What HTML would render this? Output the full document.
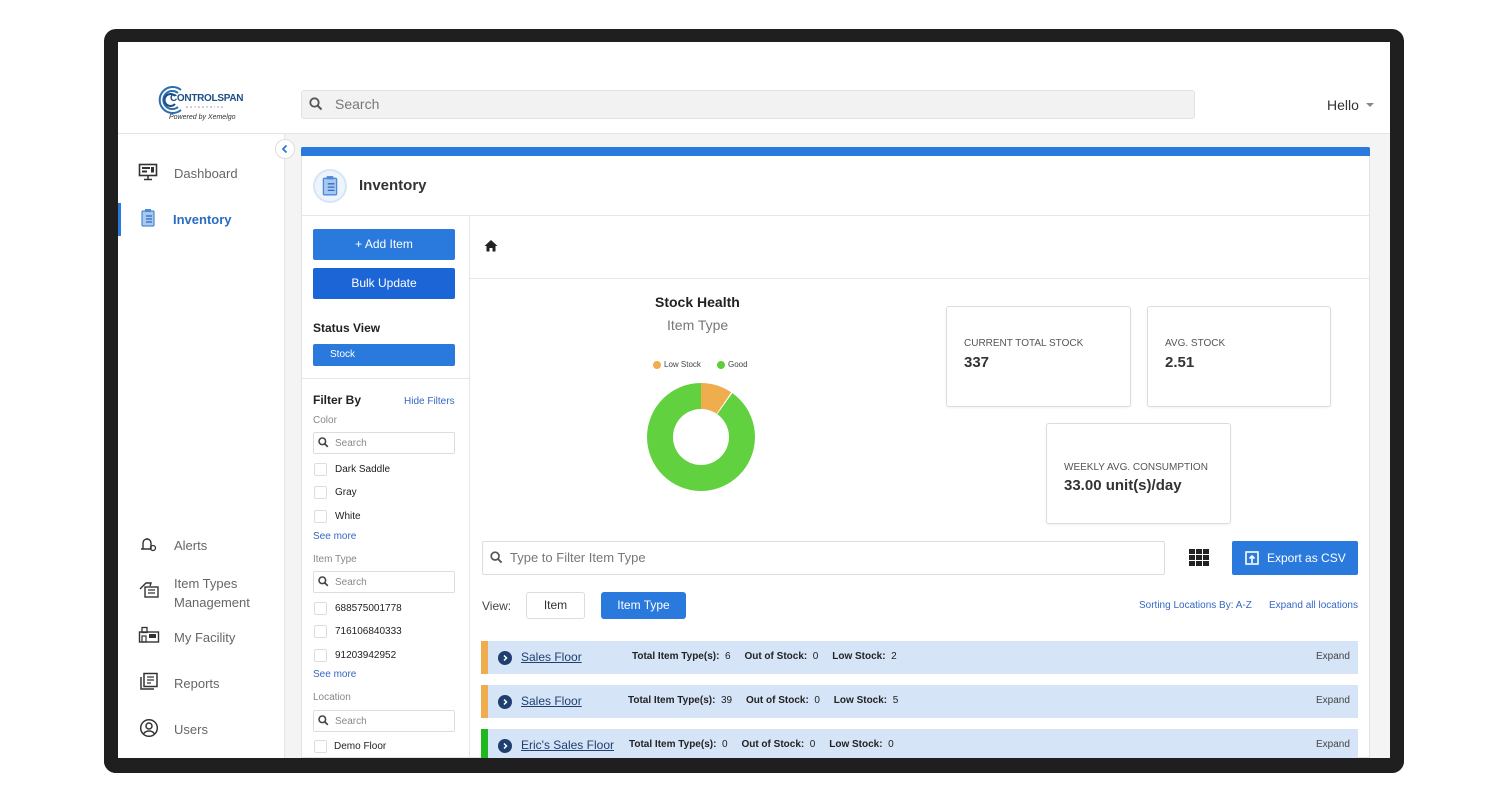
<!DOCTYPE html>
<html><head><meta charset="utf-8"><style>
*{box-sizing:border-box;margin:0;padding:0}
body{width:1500px;height:800px;background:#fff;font-family:"Liberation Sans",Arial,sans-serif;position:relative;overflow:hidden;color:#222}
.a{position:absolute}
.bezel{left:104px;top:29px;width:1300px;height:744px;background:#1f1f1f;border-radius:12px}
.screen{left:118px;top:42px;width:1272px;height:716px;background:#fff;overflow:hidden}
.blue{background:#2a7ade;color:#fff}
.cb{width:13px;height:13px;border:1px solid #ddd;border-radius:2px;background:#fff}
.srch{border:1px solid #ddd;border-radius:2px;height:22px;background:#fff}
.row{left:481px;width:877px;height:33px;background:#d6e4f7;font-size:10px}
.row b{font-weight:bold}
.lnk{color:#3567c4}
.box{border:1px solid #ddd;border-radius:3px;background:#fff;box-shadow:0 1px 2px rgba(0,0,0,.06)}
.nav{font-size:13px;color:#666}
.chev{width:14px;height:14px;border-radius:50%;background:#1e3f70}
</style></head><body>
<div class="a bezel"></div>
<div class="a screen"></div>
<div class="a" style="left:118px;top:133px;width:1272px;height:1px;background:#e4e4e4"></div>
<svg class="a" style="left:155px;top:84px" width="32" height="32" viewBox="0 0 32 32"><g fill="none" stroke="#2a6cb0" stroke-width="2"><path d="M26 6A13 13 0 1 0 26 26"/><path d="M23 9A9 9 0 1 0 23 23"/></g><path d="M20 12A6 6 0 1 0 20 20" fill="none" stroke="#1b4f86" stroke-width="2"/></svg>
<div class="a" style="left:170px;top:93px;font-size:10px;font-weight:bold;color:#1b4f86;letter-spacing:-.3px">CONTROLSPAN</div>
<div class="a" style="left:186px;top:105px;font-size:3px;color:#888;letter-spacing:2px">ENTERPRISE</div>
<div class="a" style="left:169px;top:114px;font-size:7px;font-style:italic;color:#333">Powered by Xemelgo</div>
<div class="a" style="left:301px;top:90px;width:894px;height:29px;background:#f2f2f2;border:1px solid #e2e2e2;border-radius:3px"></div>
<svg class="a" style="left:309px;top:97px" width="14" height="14" viewBox="0 0 14 14"><circle cx="5.5" cy="5.5" r="4.2" fill="none" stroke="#555" stroke-width="1.8"/><path d="M8.7 8.7L12.5 12.5" stroke="#555" stroke-width="2"/></svg>
<div class="a" style="left:335px;top:96px;font-size:14px;color:#777">Search</div>
<div class="a" style="left:1327px;top:97px;font-size:14px;color:#333">Hello</div>
<div class="a" style="left:1366px;top:103px;border-left:4px solid transparent;border-right:4px solid transparent;border-top:4px solid #888"></div>
<div class="a" style="left:285px;top:134px;width:1105px;height:624px;background:#f4f4f4"></div>
<div class="a" style="left:284px;top:134px;width:1px;height:624px;background:#e6e6e6"></div>
<div class="a" style="left:275px;top:139px;width:20px;height:20px;border-radius:50%;background:#fff;border:1px solid #ddd"></div>
<svg class="a" style="left:280px;top:144px" width="10" height="10" viewBox="0 0 10 10"><path d="M6.5 1.5L3 5l3.5 3.5" fill="none" stroke="#2a7ade" stroke-width="1.8"/></svg>
<div class="a" style="left:118px;top:203px;width:3px;height:33px;background:#2a7ade"></div>
<svg class="a" style="left:138px;top:163px" width="20" height="18" viewBox="0 0 20 18"><rect x="1.5" y="1.5" width="17" height="11" fill="none" stroke="#333" stroke-width="1.6"/><rect x="4" y="4" width="8" height="2" fill="#333"/><rect x="4" y="7.5" width="5" height="2" fill="#333"/><rect x="13" y="4" width="3" height="5.5" fill="#333"/><path d="M10 13v3M6 16.5h8" stroke="#333" stroke-width="1.5"/></svg>
<div class="a nav" style="left:174px;top:166px">Dashboard</div>
<svg class="a" style="left:139px;top:208px" width="18" height="20" viewBox="0 0 18 20"><rect x="3" y="3" width="12" height="15" rx="1" fill="#a9c8f0" stroke="#4a8ad8" stroke-width="1.2"/><rect x="6" y="1" width="6" height="3" fill="#4a8ad8"/><path d="M7 8h6M7 11h6M7 14h6" stroke="#2a6cc4" stroke-width="1.2"/></svg>
<div class="a" style="left:173px;top:212px;font-size:13px;color:#2a6cc4;font-weight:bold">Inventory</div>
<svg class="a" style="left:138px;top:535px" width="20" height="18" viewBox="0 0 20 18"><path d="M3 14h10M5 14V8a4 4 0 0 1 8 0v6M9 3v1" fill="none" stroke="#333" stroke-width="1.4"/><circle cx="15" cy="13" r="2.5" fill="none" stroke="#333" stroke-width="1.3"/></svg>
<div class="a nav" style="left:174px;top:538px">Alerts</div>
<svg class="a" style="left:138px;top:580px" width="22" height="20" viewBox="0 0 22 20"><path d="M2 9l6-6h5l-1 3" fill="none" stroke="#333" stroke-width="1.4"/><rect x="7" y="7" width="13" height="10" fill="none" stroke="#333" stroke-width="1.4"/><path d="M10 10h7M10 13h7" stroke="#333" stroke-width="1.3"/></svg>
<div class="a nav" style="left:174px;top:574px;line-height:19px">Item Types<br>Management</div>
<svg class="a" style="left:138px;top:626px" width="22" height="18" viewBox="0 0 22 18"><rect x="1.5" y="6" width="19" height="10" fill="none" stroke="#333" stroke-width="1.4"/><rect x="4" y="1.5" width="5" height="5" fill="none" stroke="#333" stroke-width="1.3"/><rect x="11" y="8" width="7" height="4" fill="#333"/><rect x="4" y="10" width="4" height="6" fill="none" stroke="#333" stroke-width="1.2"/></svg>
<div class="a nav" style="left:174px;top:630px">My Facility</div>
<svg class="a" style="left:139px;top:672px" width="20" height="20" viewBox="0 0 20 20"><rect x="5" y="1.5" width="13" height="13" fill="none" stroke="#333" stroke-width="1.5"/><path d="M2 5v12h13" fill="none" stroke="#333" stroke-width="1.5"/><path d="M8 5h7M8 8h7M8 11h4" stroke="#333" stroke-width="1.3"/></svg>
<div class="a nav" style="left:174px;top:676px">Reports</div>
<svg class="a" style="left:139px;top:718px" width="20" height="20" viewBox="0 0 20 20"><circle cx="10" cy="10" r="8.3" fill="none" stroke="#333" stroke-width="1.5"/><circle cx="10" cy="8" r="3" fill="none" stroke="#333" stroke-width="1.5"/><path d="M4.5 16a6 5 0 0 1 11 0" fill="none" stroke="#333" stroke-width="1.5"/></svg>
<div class="a nav" style="left:174px;top:722px">Users</div>
<div class="a" style="left:301px;top:147px;width:1069px;height:611px;background:#fff;border:1px solid #e3e3e3"></div>
<div class="a" style="left:301px;top:147px;width:1069px;height:9px;background:#2a7ade;border-radius:2px 2px 0 0"></div>
<div class="a" style="left:313px;top:169px;width:34px;height:34px;border-radius:50%;background:#eef4fc;border:2px solid #d7e5f7"></div>
<svg class="a" style="left:320px;top:175px" width="20" height="22" viewBox="0 0 18 20"><rect x="3" y="3" width="12" height="15" rx="1" fill="#a9c8f0" stroke="#4a8ad8" stroke-width="1.2"/><rect x="6" y="1" width="6" height="3" fill="#4a8ad8"/><path d="M7 8h6M7 11h6M7 14h6" stroke="#2a6cc4" stroke-width="1.2"/></svg>
<div class="a" style="left:359px;top:177px;font-size:15px;font-weight:bold;color:#333">Inventory</div>
<div class="a" style="left:301px;top:215px;width:1069px;height:1px;background:#e6e6e6"></div>
<div class="a" style="left:469px;top:216px;width:1px;height:542px;background:#e6e6e6"></div>
<div class="a" style="left:470px;top:278px;width:900px;height:1px;background:#e6e6e6"></div>
<div class="a blue" style="left:313px;top:229px;width:142px;height:31px;border-radius:2px;font-size:12px;text-align:center;line-height:31px">+ Add Item</div>
<div class="a" style="left:313px;top:268px;width:142px;height:31px;border-radius:2px;font-size:12px;text-align:center;line-height:31px;background:#1b65d6;color:#fff">Bulk Update</div>
<div class="a" style="left:313px;top:321px;font-size:12px;font-weight:bold">Status View</div>
<div class="a blue" style="left:313px;top:344px;width:142px;height:22px;border-radius:2px;font-size:10px;line-height:22px;padding-left:17px">Stock</div>
<div class="a" style="left:301px;top:378px;width:168px;height:1px;background:#e6e6e6"></div>
<div class="a" style="left:313px;top:393px;font-size:12px;font-weight:bold">Filter By</div>
<div class="a lnk" style="left:404px;top:396px;font-size:10px">Hide Filters</div>
<div class="a" style="left:313px;top:415px;font-size:10px;color:#888">Color</div>
<div class="a srch" style="left:313px;top:432px;width:142px"></div>
<svg class="a" style="left:318px;top:437px" width="11" height="11" viewBox="0 0 14 14"><circle cx="5.5" cy="5.5" r="4.2" fill="none" stroke="#444" stroke-width="2"/><path d="M8.7 8.7L12.5 12.5" stroke="#444" stroke-width="2.2"/></svg>
<div class="a" style="left:335px;top:438px;font-size:10px;color:#888">Search</div>
<div class="a cb" style="left:314px;top:463px"></div><div class="a" style="left:335px;top:464px;font-size:10px">Dark Saddle</div>
<div class="a cb" style="left:314px;top:486px"></div><div class="a" style="left:335px;top:487px;font-size:10px">Gray</div>
<div class="a cb" style="left:314px;top:510px"></div><div class="a" style="left:335px;top:511px;font-size:10px">White</div>
<div class="a lnk" style="left:313px;top:531px;font-size:10px">See more</div>
<div class="a" style="left:313px;top:554px;font-size:10px;color:#888">Item Type</div>
<div class="a srch" style="left:313px;top:571px;width:142px"></div>
<svg class="a" style="left:318px;top:576px" width="11" height="11" viewBox="0 0 14 14"><circle cx="5.5" cy="5.5" r="4.2" fill="none" stroke="#444" stroke-width="2"/><path d="M8.7 8.7L12.5 12.5" stroke="#444" stroke-width="2.2"/></svg>
<div class="a" style="left:335px;top:577px;font-size:10px;color:#888">Search</div>
<div class="a cb" style="left:314px;top:602px"></div><div class="a" style="left:335px;top:603px;font-size:10px">688575001778</div>
<div class="a cb" style="left:314px;top:625px"></div><div class="a" style="left:335px;top:626px;font-size:10px">716106840333</div>
<div class="a cb" style="left:314px;top:649px"></div><div class="a" style="left:335px;top:650px;font-size:10px">91203942952</div>
<div class="a lnk" style="left:313px;top:669px;font-size:10px">See more</div>
<div class="a" style="left:313px;top:692px;font-size:10px;color:#888">Location</div>
<div class="a srch" style="left:313px;top:710px;width:142px"></div>
<svg class="a" style="left:318px;top:715px" width="11" height="11" viewBox="0 0 14 14"><circle cx="5.5" cy="5.5" r="4.2" fill="none" stroke="#444" stroke-width="2"/><path d="M8.7 8.7L12.5 12.5" stroke="#444" stroke-width="2.2"/></svg>
<div class="a" style="left:335px;top:716px;font-size:10px;color:#888">Search</div>
<div class="a cb" style="left:314px;top:740px"></div><div class="a" style="left:334px;top:741px;font-size:10px">Demo Floor</div>
<svg class="a" style="left:484px;top:239px" width="14" height="13" viewBox="0 0 14 13"><path d="M7 1L0.5 7H2.5V12.5H5.5V9H8.5V12.5H11.5V7H13.5Z" fill="#222"/></svg>
<div class="a" style="left:655px;top:294px;font-size:14px;font-weight:bold">Stock Health</div>
<div class="a" style="left:667px;top:317px;font-size:14px;color:#777">Item Type</div>
<div class="a" style="left:653px;top:361px;width:8px;height:8px;border-radius:50%;background:#f0ad4e"></div>
<div class="a" style="left:664px;top:360px;font-size:8px;color:#444">Low Stock</div>
<div class="a" style="left:717px;top:361px;width:8px;height:8px;border-radius:50%;background:#5ccf3a"></div>
<div class="a" style="left:728px;top:360px;font-size:8px;color:#444">Good</div>
<div class="a" style="left:647px;top:383px;width:108px;height:108px;border-radius:50%;background:conic-gradient(#f0ad4e 0 34deg,#fff 34deg 35.5deg,#62d13f 35.5deg 360deg)"></div>
<div class="a" style="left:673px;top:409px;width:56px;height:56px;border-radius:50%;background:#fff"></div>
<div class="a box" style="left:946px;top:306px;width:185px;height:101px"></div>
<div class="a" style="left:964px;top:338px;font-size:10px;color:#555">CURRENT TOTAL STOCK</div>
<div class="a" style="left:964px;top:354px;font-size:15px;font-weight:bold;color:#333">337</div>
<div class="a box" style="left:1147px;top:306px;width:184px;height:101px"></div>
<div class="a" style="left:1165px;top:338px;font-size:10px;color:#555">AVG. STOCK</div>
<div class="a" style="left:1165px;top:354px;font-size:15px;font-weight:bold;color:#333">2.51</div>
<div class="a box" style="left:1046px;top:423px;width:185px;height:101px"></div>
<div class="a" style="left:1064px;top:462px;font-size:10px;color:#555">WEEKLY AVG. CONSUMPTION</div>
<div class="a" style="left:1064px;top:477px;font-size:15px;font-weight:bold;color:#333">33.00 unit(s)/day</div>
<div class="a" style="left:482px;top:541px;width:683px;height:34px;border:1px solid #ddd;border-radius:2px"></div>
<svg class="a" style="left:490px;top:551px" width="13" height="13" viewBox="0 0 14 14"><circle cx="5.5" cy="5.5" r="4.2" fill="none" stroke="#555" stroke-width="1.8"/><path d="M8.7 8.7L12.5 12.5" stroke="#555" stroke-width="2"/></svg>
<div class="a" style="left:510px;top:550px;font-size:13px;color:#777">Type to Filter Item Type</div>
<svg class="a" style="left:1189px;top:549px" width="20" height="17" viewBox="0 0 20 17"><g fill="#222"><rect x="0" y="0" width="6" height="5"/><rect x="7" y="0" width="6" height="5"/><rect x="14" y="0" width="6" height="5"/><rect x="0" y="6" width="6" height="5"/><rect x="7" y="6" width="6" height="5"/><rect x="14" y="6" width="6" height="5"/><rect x="0" y="12" width="6" height="5"/><rect x="7" y="12" width="6" height="5"/><rect x="14" y="12" width="6" height="5"/></g></svg>
<div class="a blue" style="left:1232px;top:541px;width:126px;height:34px;border-radius:2px;font-size:12px;line-height:34px;padding-left:35px">Export as CSV</div>
<svg class="a" style="left:1245px;top:551px" width="14" height="14" viewBox="0 0 14 14"><rect x="1" y="1" width="12" height="12" fill="none" stroke="#fff" stroke-width="1.6"/><path d="M7 12V5M4.5 7.5L7 5l2.5 2.5" fill="none" stroke="#fff" stroke-width="1.6"/></svg>
<div class="a" style="left:482px;top:599px;font-size:12px;color:#444">View:</div>
<div class="a" style="left:526px;top:592px;width:59px;height:27px;border:1px solid #ddd;border-radius:3px;font-size:12px;text-align:center;line-height:25px;color:#333">Item</div>
<div class="a blue" style="left:601px;top:592px;width:85px;height:27px;border-radius:3px;font-size:12px;text-align:center;line-height:27px">Item Type</div>
<div class="a lnk" style="left:1139px;top:600px;font-size:10px">Sorting Locations By: A-Z</div>
<div class="a lnk" style="left:1269px;top:600px;font-size:10px">Expand all locations</div>

<div class="a row" style="top:641px"></div><div class="a" style="left:481px;top:641px;width:7px;height:33px;background:#f0ad4e"></div>
<svg class="a" style="left:498px;top:651px" width="14" height="14" viewBox="0 0 14 14"><circle cx="7" cy="7" r="7" fill="#1e3f70"/><path d="M6 4.5L8.5 7 6 9.5" fill="none" stroke="#fff" stroke-width="1.5"/></svg>
<div class="a" style="left:521px;top:650px;font-size:12px;text-decoration:underline;color:#1e3f70">Sales Floor</div>
<div class="a" style="left:632px;top:651px;font-size:10px"><b>Total Item Type(s):</b>&nbsp; 6 &nbsp;&nbsp;&nbsp; <b>Out of Stock:</b>&nbsp; 0 &nbsp;&nbsp;&nbsp; <b>Low Stock:</b>&nbsp; 2</div>
<div class="a" style="left:1316px;top:651px;font-size:10px;color:#444">Expand</div>

<div class="a row" style="top:685px"></div><div class="a" style="left:481px;top:685px;width:7px;height:33px;background:#f0ad4e"></div>
<svg class="a" style="left:498px;top:695px" width="14" height="14" viewBox="0 0 14 14"><circle cx="7" cy="7" r="7" fill="#1e3f70"/><path d="M6 4.5L8.5 7 6 9.5" fill="none" stroke="#fff" stroke-width="1.5"/></svg>
<div class="a" style="left:521px;top:694px;font-size:12px;text-decoration:underline;color:#1e3f70">Sales Floor</div>
<div class="a" style="left:628px;top:695px;font-size:10px"><b>Total Item Type(s):</b>&nbsp; 39 &nbsp;&nbsp;&nbsp; <b>Out of Stock:</b>&nbsp; 0 &nbsp;&nbsp;&nbsp; <b>Low Stock:</b>&nbsp; 5</div>
<div class="a" style="left:1316px;top:695px;font-size:10px;color:#444">Expand</div>

<div class="a row" style="top:729px;height:29px"></div><div class="a" style="left:481px;top:729px;width:7px;height:29px;background:#1fb81f"></div>
<svg class="a" style="left:498px;top:739px" width="14" height="14" viewBox="0 0 14 14"><circle cx="7" cy="7" r="7" fill="#1e3f70"/><path d="M6 4.5L8.5 7 6 9.5" fill="none" stroke="#fff" stroke-width="1.5"/></svg>
<div class="a" style="left:521px;top:738px;font-size:12px;text-decoration:underline;color:#1e3f70">Eric's Sales Floor</div>
<div class="a" style="left:629px;top:739px;font-size:10px"><b>Total Item Type(s):</b>&nbsp; 0 &nbsp;&nbsp;&nbsp; <b>Out of Stock:</b>&nbsp; 0 &nbsp;&nbsp;&nbsp; <b>Low Stock:</b>&nbsp; 0</div>
<div class="a" style="left:1316px;top:739px;font-size:10px;color:#444">Expand</div>
<div class="a" style="left:104px;top:758px;width:1300px;height:15px;background:#1f1f1f;border-radius:0 0 12px 12px"></div>
</body></html>
